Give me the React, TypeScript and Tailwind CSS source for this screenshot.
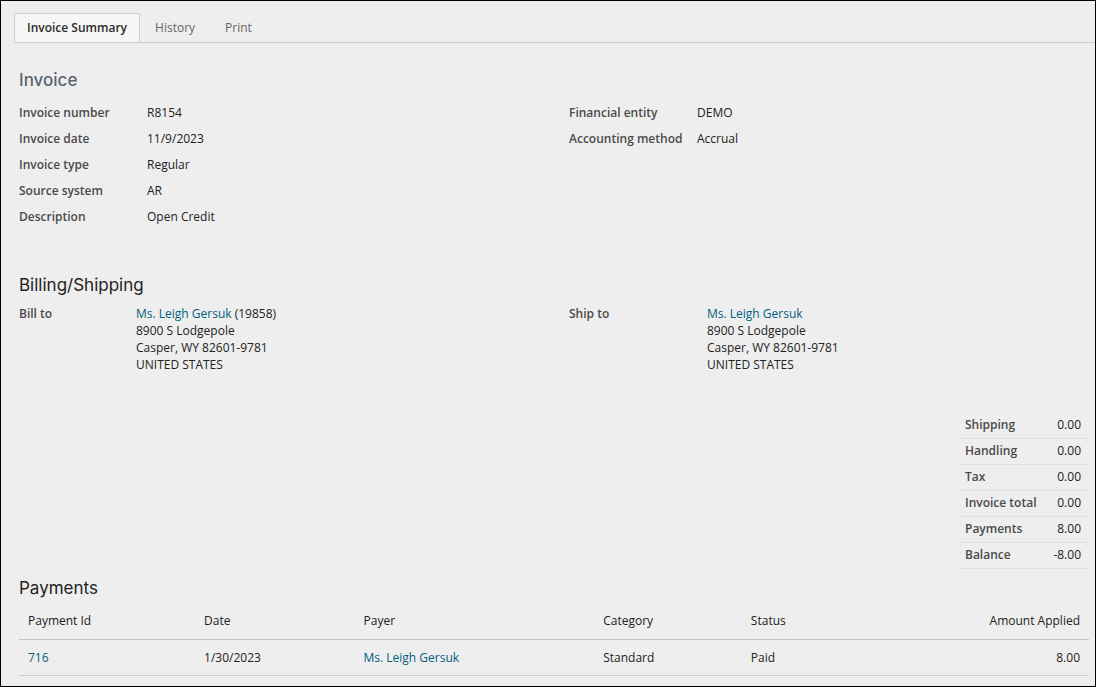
import clsx from 'clsx'

const tabs = [
  { label: 'Invoice Summary', href: '#summary', active: true },
  { label: 'History', href: '#history', active: false },
  { label: 'Print', href: '#print', active: false },
]

const invoiceFields = [
  { label: 'Invoice number', value: 'R8154' },
  { label: 'Invoice date', value: '11/9/2023' },
  { label: 'Invoice type', value: 'Regular' },
  { label: 'Source system', value: 'AR' },
  { label: 'Description', value: 'Open Credit' },
]

const accountingFields = [
  { label: 'Financial entity', value: 'DEMO' },
  { label: 'Accounting method', value: 'Accrual' },
]

const totals = [
  { label: 'Shipping', value: '0.00' },
  { label: 'Handling', value: '0.00' },
  { label: 'Tax', value: '0.00' },
  { label: 'Invoice total', value: '0.00' },
  { label: 'Payments', value: '8.00' },
  { label: 'Balance', value: '-8.00' },
]

const payments = [
  { id: '716', date: '1/30/2023', payer: 'Ms. Leigh Gersuk', category: 'Standard', status: 'Paid', amount: '8.00' },
]

type Field = { label: string; value: string }

export default function App() {
  return (
    <div className="min-h-screen border border-black bg-[#eeeeee] pb-2.5 font-['Open_Sans',sans-serif] text-xs text-[#222222]">
      {/* Tabs */}
      <nav className="pt-3 pl-[13px]" aria-label="Invoice">
        <div className="flex border-b border-[#cccccc]">
          {tabs.map((tab) => (
            <a
              key={tab.label}
              href={tab.href}
              aria-current={tab.active ? 'page' : undefined}
              className={clsx(
                '-mb-px flex h-[30px] items-center border',
                tab.active
                  ? 'rounded-t-xs border-[#cccccc] bg-[#f6f6f6] px-3 font-semibold text-[#2c2c2c]'
                  : 'border-transparent px-3.5 text-[#666666] hover:text-[#222222]'
              )}
            >
              {tab.label}
            </a>
          ))}
        </div>
      </nav>

      <main className="pr-1.5 pl-[18px]">
        {/* Invoice */}
        <section className="mt-[25px]">
          <h1 className="font-[Inter,sans-serif] text-[17px] leading-6 font-medium text-[#5c656e]">Invoice</h1>
          <div className="mt-2 grid grid-cols-[550fr_520fr]">
            <FieldList fields={invoiceFields} />
            <FieldList fields={accountingFields} />
          </div>
        </section>

        {/* Billing/Shipping */}
        <section className="mt-[43px]">
          <SectionTitle>Billing/Shipping</SectionTitle>
          <div className="mt-2 grid grid-cols-[550fr_520fr]">
            <dl className="grid grid-cols-[117px_1fr] content-start leading-[17px]">
              <dt className="font-semibold text-[#4a4a4a]">Bill to</dt>
              <dd><Address suffix=" (19858)" /></dd>
            </dl>
            <dl className="grid grid-cols-[138px_1fr] content-start leading-[17px]">
              <dt className="font-semibold text-[#4a4a4a]">Ship to</dt>
              <dd><Address /></dd>
            </dl>
          </div>
          <table className="mt-[39px] mr-px ml-auto w-32">
            <tbody>
              {totals.map((row) => (
                <tr key={row.label} className="h-[26px] border-b border-[#e2e2e2]">
                  <th scope="row" className="pl-[5px] text-left font-semibold whitespace-nowrap text-[#4a4a4a]">{row.label}</th>
                  <td className="pr-[7px] text-right">{row.value}</td>
                </tr>
              ))}
            </tbody>
          </table>
        </section>

        {/* Payments */}
        <section className="mt-[7px]">
          <SectionTitle>Payments</SectionTitle>
          <table className="mt-1 w-full table-fixed text-left">
            <thead>
              <tr className="h-9 border-b border-[#c4c4c4]">
                <th className="w-[17.3%] pl-[9px] font-normal">Payment Id</th>
                <th className="w-[14.9%] font-normal">Date</th>
                <th className="w-[22.4%] font-normal">Payer</th>
                <th className="w-[13.8%] font-normal">Category</th>
                <th className="font-normal">Status</th>
                <th className="pr-[9px] text-right font-normal">Amount Applied</th>
              </tr>
            </thead>
            <tbody>
              {payments.map((payment) => (
                <tr key={payment.id} className="h-9 border-b border-[#cccccc]">
                  <td className="pl-[9px]">
                    <a href="#payment" className="text-[#005e7d] hover:underline">{payment.id}</a>
                  </td>
                  <td>{payment.date}</td>
                  <td>
                    <a href="#payer" className="text-[#005e7d] hover:underline">{payment.payer}</a>
                  </td>
                  <td>{payment.category}</td>
                  <td>{payment.status}</td>
                  <td className="pr-[9px] text-right">{payment.amount}</td>
                </tr>
              ))}
            </tbody>
          </table>
        </section>
      </main>
    </div>
  )
}

function SectionTitle({ children }: { children: string }) {
  return <h2 className="font-[Inter,sans-serif] text-[17px] leading-6">{children}</h2>
}

function FieldList({ fields }: { fields: Field[] }) {
  return (
    <dl className="grid grid-cols-[128px_1fr] content-start leading-[26px]">
      {fields.map((field) => (
        <div key={field.label} className="contents">
          <dt className="font-semibold text-[#4a4a4a]">{field.label}</dt>
          <dd>{field.value}</dd>
        </div>
      ))}
    </dl>
  )
}

function Address({ suffix = '' }: { suffix?: string }) {
  return (
    <address className="not-italic">
      <a href="#contact" className="text-[#005e7d] hover:underline">Ms. Leigh Gersuk</a>{suffix}
      <br />
      8900 S Lodgepole
      <br />
      Casper, WY 82601-9781
      <br />
      UNITED STATES
    </address>
  )
}
